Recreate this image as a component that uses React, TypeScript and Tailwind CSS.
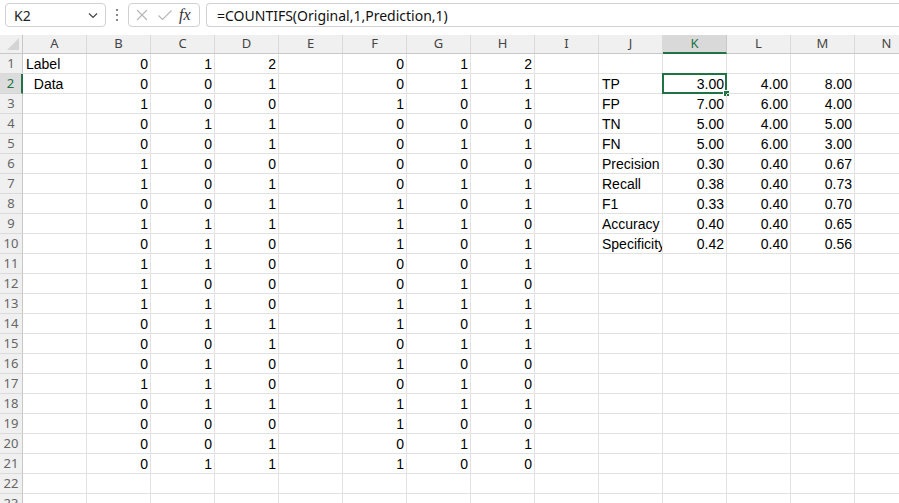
import React from "react";

const cols = ["A", "B", "C", "D", "E", "F", "G", "H", "I", "J", "K", "L", "M", "N"];

// B,C,D then F,G,H for rows 1..21
const bits: string[] = [
  "012012",
  "001011",
  "100101",
  "011000",
  "001011",
  "100000",
  "101011",
  "001101",
  "111110",
  "010101",
  "110001",
  "100010",
  "110111",
  "011101",
  "001011",
  "010100",
  "110010",
  "011111",
  "000100",
  "001011",
  "011100",
];

const metrics: [string, string, string, string][] = [
  ["TP", "3.00", "4.00", "8.00"],
  ["FP", "7.00", "6.00", "4.00"],
  ["TN", "5.00", "4.00", "5.00"],
  ["FN", "5.00", "6.00", "3.00"],
  ["Precision", "0.30", "0.40", "0.67"],
  ["Recall", "0.38", "0.40", "0.73"],
  ["F1", "0.33", "0.40", "0.70"],
  ["Accuracy", "0.40", "0.40", "0.65"],
  ["Specificity", "0.42", "0.40", "0.56"],
];

function cellValue(row: number, col: string): { text: string; align: "l" | "r" } {
  if (row <= 21) {
    const b = bits[row - 1];
    const idx = { B: 0, C: 1, D: 2, F: 3, G: 4, H: 5 }[col as "B"];
    if (idx !== undefined) return { text: b[idx], align: "r" };
  }
  if (col === "A" && row === 1) return { text: "Label", align: "l" };
  if (col === "A" && row === 2) return { text: "  Data", align: "l" };
  if (row >= 2 && row <= 10) {
    const m = metrics[row - 2];
    if (col === "J") return { text: m[0], align: "l" };
    if (col === "K") return { text: m[1], align: "r" };
    if (col === "L") return { text: m[2], align: "r" };
    if (col === "M") return { text: m[3], align: "r" };
  }
  return { text: "", align: "r" };
}

export default function App() {
  const rows = Array.from({ length: 23 }, (_, i) => i + 1);
  return (
    <div className="w-[899px] h-[503px] overflow-hidden bg-white" style={{ fontFamily: "'Liberation Sans', Arial, sans-serif" }}>
      {/* formula bar */}
      <div className="flex items-start h-[35px] pt-[3px] bg-white">
        <div className="ml-[5px] w-[101px] h-[24px] flex items-center justify-between border border-[#d1d1d1] rounded-[4px] pl-[8px] pr-[6px] text-[14px] text-[#222]" style={{ fontFamily: "'Noto Sans', sans-serif" }}>
          <span>K2</span>
          <svg width="12" height="12" viewBox="0 0 12 12" className="text-[#444]">
            <path d="M2 4.5 L6 8.5 L10 4.5" fill="none" stroke="currentColor" strokeWidth="1.2" />
          </svg>
        </div>
        <div className="w-[22px] h-[24px] flex flex-col items-center justify-center gap-[3px]">
          <div className="w-[2px] h-[2px] bg-[#888]" />
          <div className="w-[2px] h-[2px] bg-[#888]" />
          <div className="w-[2px] h-[2px] bg-[#888]" />
        </div>
        <div className="w-[72px] h-[24px] flex items-center border border-[#d1d1d1] rounded-[4px] pl-[6px]">
          <svg width="14" height="14" viewBox="0 0 14 14" className="text-[#b5b5b5]">
            <path d="M2 2 L12 12 M12 2 L2 12" fill="none" stroke="currentColor" strokeWidth="1.1" />
          </svg>
          <svg width="16" height="14" viewBox="0 0 16 14" className="ml-[8px] text-[#b5b5b5]">
            <path d="M1.5 7.5 L5.5 11.5 L14.5 2.5" fill="none" stroke="currentColor" strokeWidth="1.1" />
          </svg>
          <span className="ml-[6px] text-[16px] italic text-[#333]" style={{ fontFamily: "'Liberation Serif', serif" }}>fx</span>
        </div>
        <div className="ml-[6px] flex-1 h-[24px] flex items-center border border-r-0 border-[#d1d1d1] rounded-l-[4px] pl-[10px] text-[14px] text-[#111]" style={{ fontFamily: "'Noto Sans', sans-serif" }}>
          =COUNTIFS(Original,1,Prediction,1)
        </div>
      </div>

      {/* grid */}
      <div className="grid grid-cols-[23px_repeat(14,64px)] w-max">
        {/* header row */}
        <div className="h-[19px] bg-[#f0f0f0] border-r border-b border-[#c8c8c8] relative">
          <svg width="12" height="12" viewBox="0 0 12 12" className="absolute right-[3px] bottom-[3px]">
            <path d="M12 0 L12 12 L0 12 Z" fill="#d4d4d4" />
          </svg>
        </div>
        {cols.map((c) => (
          <div
            key={c}
            className={
              c === "K"
                ? "h-[19px] bg-[#d9d9d9] border-r border-[#c8c8c8] border-b-2 border-b-[#217346] flex items-center justify-center text-[13px] text-[#217346]"
                : "h-[19px] bg-[#f0f0f0] border-r border-b border-[#dadada] border-b-[#c8c8c8] flex items-center justify-center text-[13px] text-[#444]"
            }
            style={{ fontFamily: "'Noto Sans', sans-serif" }}
          >
            {c}
          </div>
        ))}

        {rows.map((r) => (
          <React.Fragment key={r}>
            <div
              className={
                r === 2
                  ? "h-[20px] bg-[#dcdcdc] border-r-2 border-r-[#217346] border-b border-b-[#d4d4d4] flex items-center justify-center text-[13px] text-[#217346]"
                  : "h-[20px] bg-[#f0f0f0] border-r border-r-[#c8c8c8] border-b border-b-[#dadada] flex items-center justify-center text-[13px] text-[#666]"
              }
              style={{ fontFamily: "'Noto Sans', sans-serif" }}
            >
              {r}
            </div>
            {cols.map((c) => {
              const v = cellValue(r, c);
              const selected = r === 2 && c === "K";
              return (
                <div
                  key={c}
                  className={`h-[20px] relative border-r border-b border-[#e1e1e1] flex items-center pt-[2px] text-[14px] text-black whitespace-pre ${
                    v.align === "r" ? "justify-end pr-[2px]" : "justify-start pl-[3px]"
                  } ${c === "J" ? "overflow-hidden" : ""}`}
                >
                  <span>{v.text}</span>
                  {selected && (
                    <>
                      <div className="absolute -left-[1px] -top-[1px] -right-[1px] -bottom-[1px] border-2 border-[#217346]" />
                      <div className="absolute -right-[4px] -bottom-[4px] w-[7px] h-[7px] bg-[#217346] border border-white" />
                    </>
                  )}
                </div>
              );
            })}
          </React.Fragment>
        ))}
      </div>
    </div>
  );
}
